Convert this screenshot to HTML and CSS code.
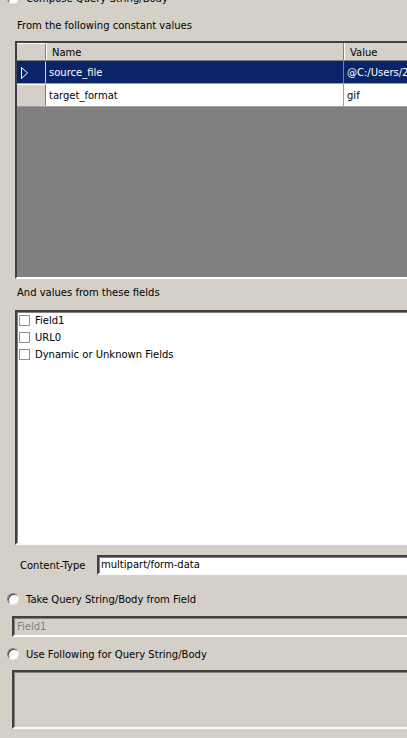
FILE: index.html
```
<!DOCTYPE html>
<html>

<head>
	<title>Query String / Body</title>
	<meta charset=utf-8>
	<link rel="stylesheet" href="styles.css">
</head>

<body>
	<div id="panel">
		<div class="radio-row top">
			<span class="radio"></span>
			<span>Compose Query String/Body</span>
		</div>

		<div class="caption first">From the following constant values</div>
		<div id="grid">
			<div class="row head">
				<div class="rowhead"></div>
				<div class="cell name">Name</div>
				<div class="cell value">Value</div>
			</div>
			<div class="row selected">
				<div class="rowhead">
					<svg width="9" height="14" viewBox="0 0 9 14">
						<path d="M1.5 1.5 L7.5 7 L1.5 12.5 Z" fill="none" stroke="#fff" stroke-width="1" />
					</svg>
				</div>
				<div class="cell name">source_file</div>
				<div class="cell value">@C:/Users/2</div>
			</div>
			<div class="row">
				<div class="rowhead"></div>
				<div class="cell name">target_format</div>
				<div class="cell value">gif</div>
			</div>
		</div>

		<div class="caption second">And values from these fields</div>
		<div id="fields">
			<label class="check"><span class="box"></span>Field1</label>
			<label class="check"><span class="box"></span>URL0</label>
			<label class="check"><span class="box"></span>Dynamic or Unknown Fields</label>
		</div>

		<div class="ctype">
			<span class="ctype-label">Content-Type</span>
			<div class="textbox">multipart/form-data</div>
		</div>
	</div>

	<div class="radio-row take">
		<span class="radio"></span>
		<span>Take Query String/Body from Field</span>
	</div>
	<div class="textbox disabled field">Field1</div>

	<div class="radio-row use">
		<span class="radio"></span>
		<span>Use Following for Query String/Body</span>
	</div>
	<div class="textbox disabled area"></div>
</body>

</html>
```

FILE: styles.css
```
body {
	margin: 0;
	background: #d4d0c8;
	font-family: "DejaVu Sans", sans-serif;
	font-size: 10px;
	color: #000;
	width: 470px;
	height: 738px;
	overflow: hidden;
}

html {
	overflow: hidden;
}

#panel {
	padding-left: 15px;
}

.radio-row {
	display: flex;
	align-items: center;
	gap: 7px;
	height: 14px;
	padding-left: 7px;
}

.radio-row.top {
	margin-top: -9px;
	margin-left: -15px;
}

.radio {
	width: 10px;
	height: 10px;
	border-radius: 50%;
	background: #fff;
	border: 1px solid;
	border-color: #808080 #e8e8e8 #e8e8e8 #808080;
	box-shadow: inset 1px 1px 0 #404040;
	flex: none;
}

.caption {
	padding-left: 2px;
	height: 13px;
	line-height: 13px;
}

.caption.first {
	margin-top: 14px;
	margin-bottom: 9px;
}

.caption.second {
	margin-top: 7px;
	margin-bottom: 11px;
}

#grid {
	height: 234px;
	background: #808080;
	border: 2px solid;
	border-color: #404040 #fff #fff #404040;
	box-shadow: inset 1px 1px 0 #808080;
}

.row {
	display: grid;
	grid-template-columns: 29px 298px 1fr;
	height: 22px;
	background: #fff;
	border-bottom: 1px solid #a0a0a0;
}

.row.head {
	height: 17px;
	background: #d4d0c8;
	border-bottom: 1px solid #808080;
}

.rowhead {
	background: #d4d0c8;
	border-top: 1px solid #fff;
	border-right: 1px solid #808080;
	display: flex;
	align-items: center;
	padding-left: 3px;
}

.cell {
	line-height: 23px;
	padding-left: 3px;
	border-right: 1px solid #a0a0a0;
	white-space: nowrap;
	overflow: hidden;
}

.head .cell {
	line-height: 19px;
	padding-left: 6px;
	border-right: 1px solid #808080;
	box-shadow: inset 1px 0 0 #fff;
}

.selected {
	background: #0a246a;
	color: #fff;
}

.selected .rowhead {
	background: #0a246a;
	border-top-color: #0a246a;
	border-right-color: #d4d0c8;
}

.selected .cell {
	border-right-color: #808080;
}

#fields {
	height: 231px;
	background: #fff;
	border: 2px solid;
	border-color: #404040 #fff #fff #404040;
	box-shadow: inset 1px 1px 0 #808080;
}

.check {
	display: flex;
	align-items: center;
	gap: 5px;
	height: 17px;
	padding-left: 2px;
}

.box {
	width: 9px;
	height: 9px;
	border: 1px solid #909090;
	background: #fff;
}

.ctype {
	display: flex;
	align-items: center;
	margin-top: 10px;
	padding-left: 5px;
}

.ctype-label {
	width: 77px;
	flex: none;
}

.textbox {
	height: 16px;
	line-height: 16px;
	padding-left: 2px;
	background: #fff;
	border: 2px solid;
	border-color: #404040 #fff #fff #404040;
	box-shadow: inset 1px 1px 0 #808080;
	flex: 1;
	white-space: nowrap;
}

.radio-row.take {
	margin-top: 17px;
}

.textbox.disabled {
	background: #d4d0c8;
	color: #808080;
	margin-left: 12px;
	padding-left: 3px;
}

.textbox.field {
	margin-top: 10px;
	height: 17px;
	line-height: 17px;
}

.radio-row.use {
	margin-top: 10px;
}

.textbox.area {
	margin-top: 9px;
	height: 55px;
}
```
